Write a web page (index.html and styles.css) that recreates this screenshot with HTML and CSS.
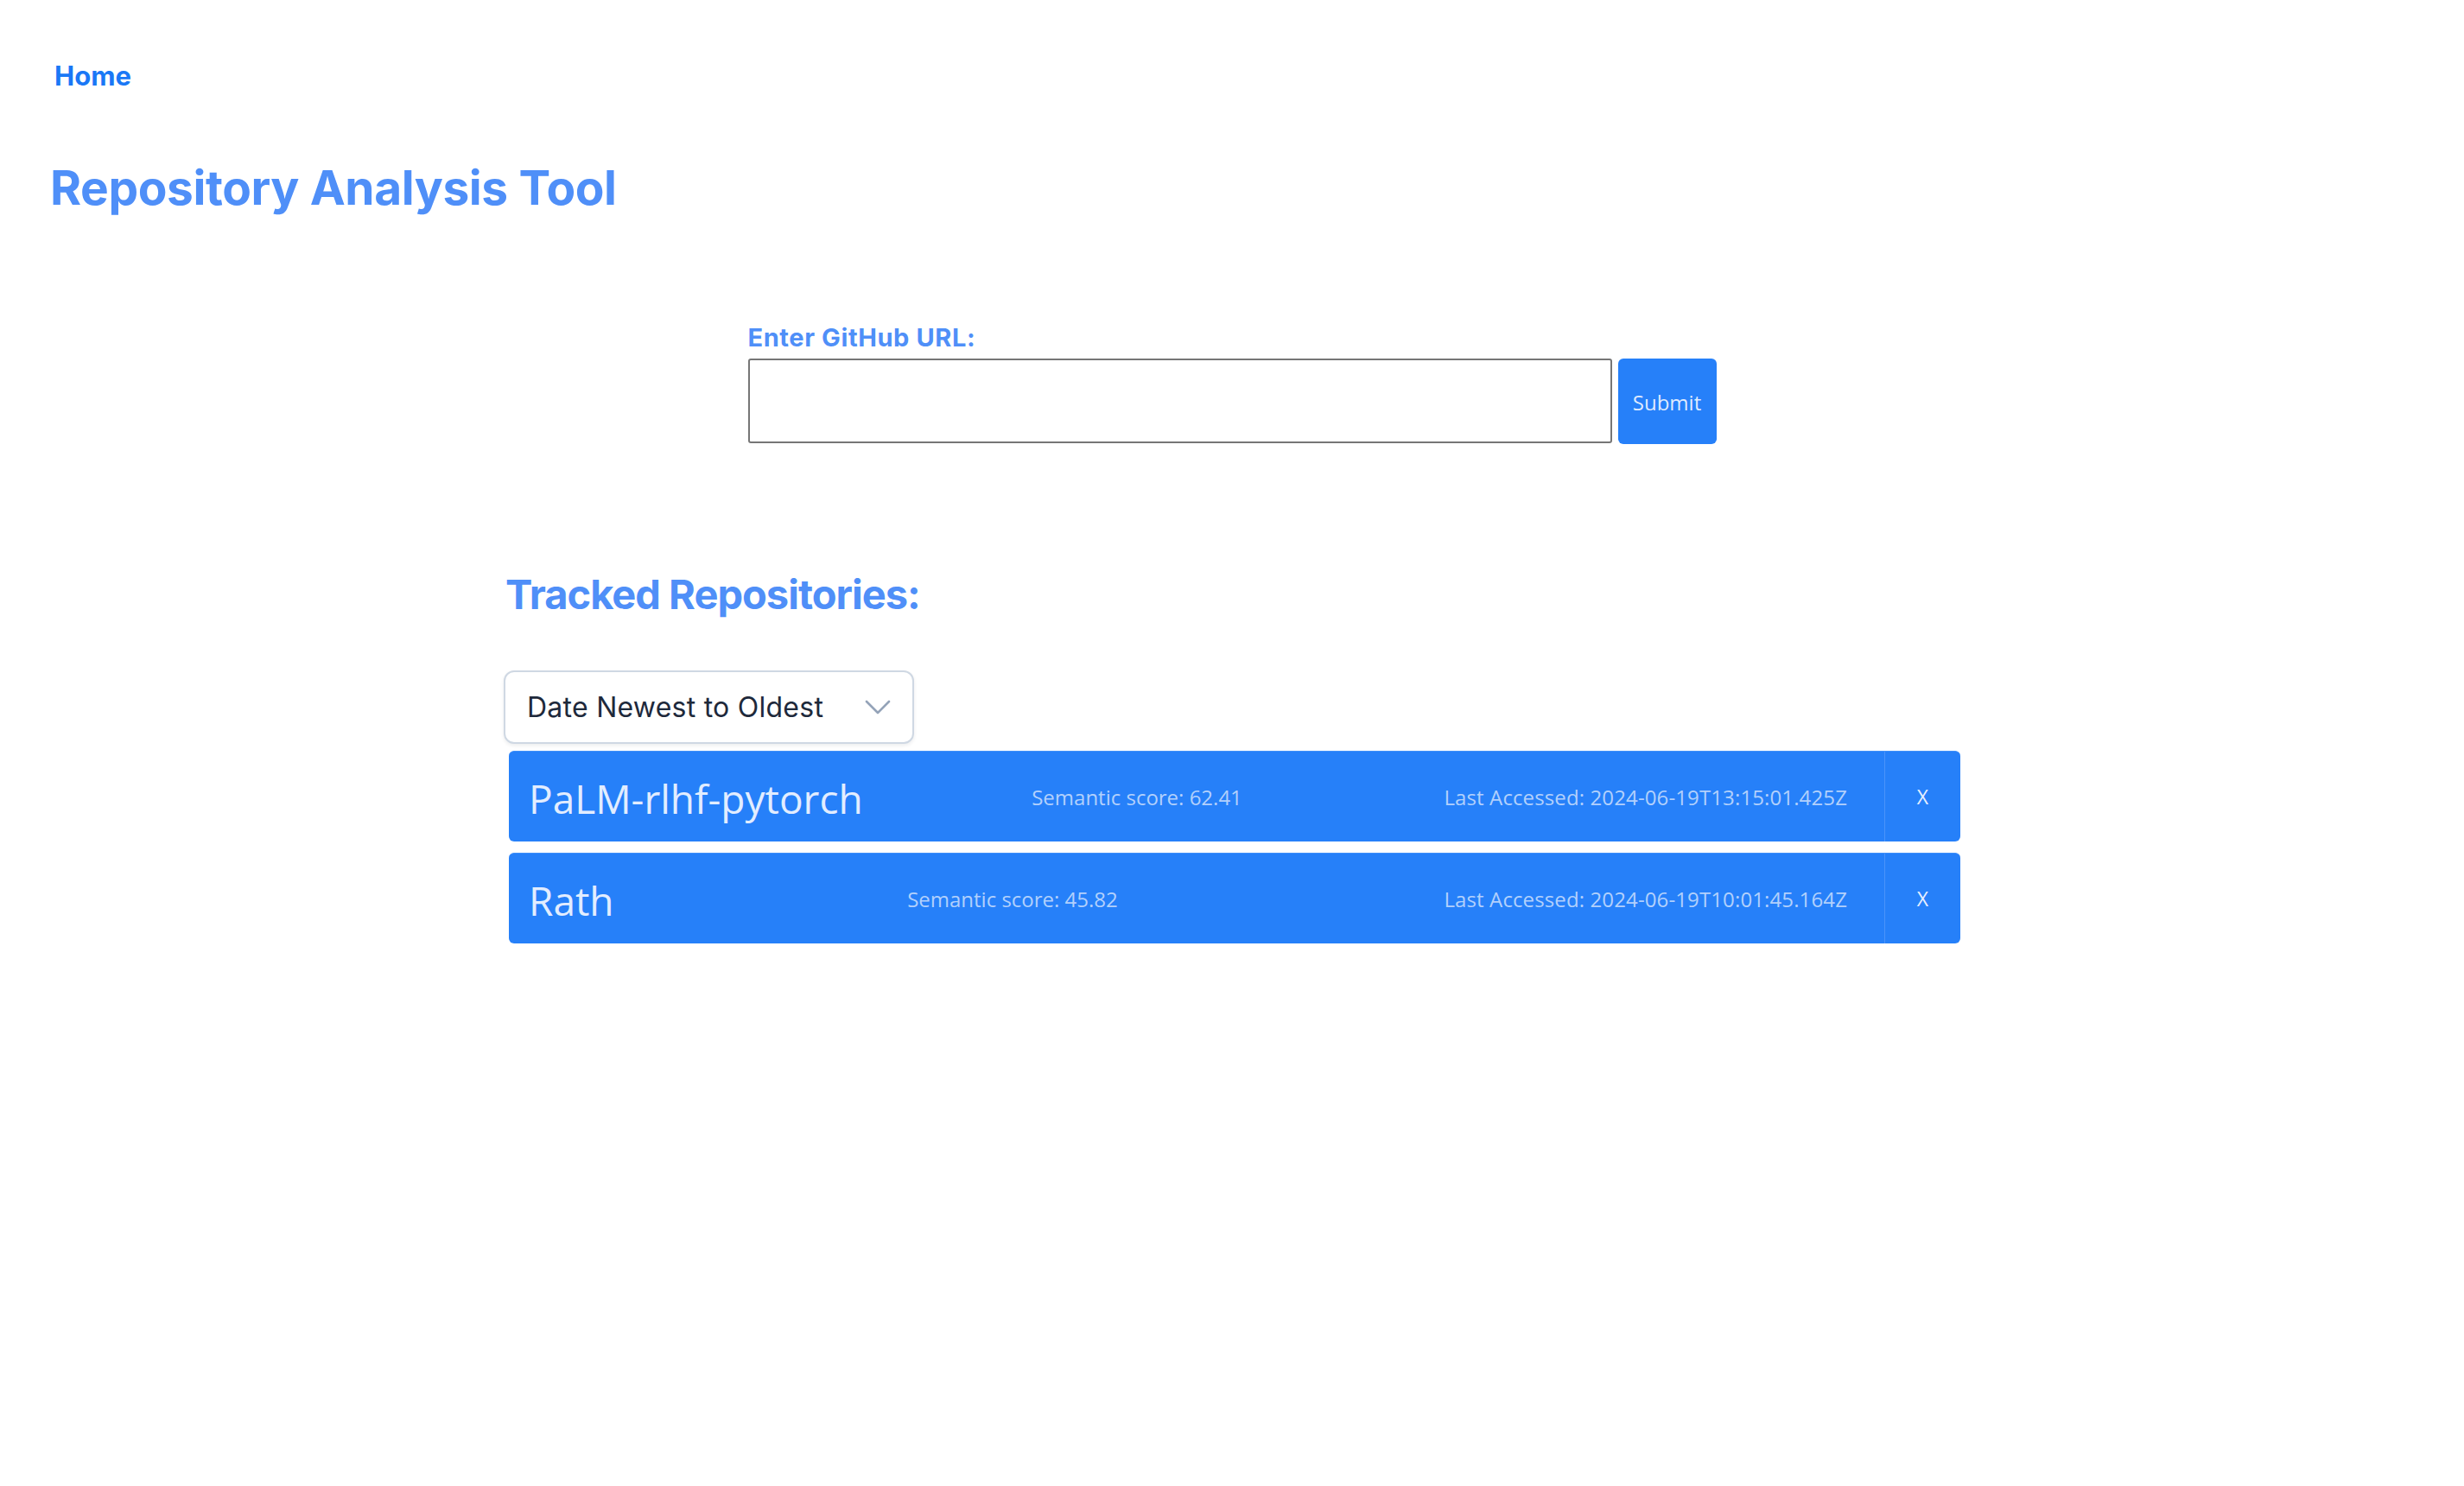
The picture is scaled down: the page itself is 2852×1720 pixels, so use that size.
FILE: index.html
```html
<!DOCTYPE html>
<html lang="en">
<head>
<meta charset="utf-8">
<title>Repository Analysis Tool</title>
<link rel="stylesheet" href="styles.css">
</head>
<body>
<nav class="nav"><a class="nav-link" href="#">Home</a></nav>
<h1 class="title">Repository Analysis Tool</h1>
<form class="url-form">
  <label class="url-label" for="url">Enter GitHub URL:</label>
  <div class="url-row">
    <input class="url-input" id="url" type="text">
    <button class="submit-btn" type="button">Submit</button>
  </div>
</form>
<section class="tracked">
  <h2 class="tracked-title">Tracked Repositories:</h2>
  <div class="sort-select">
    <span class="sort-text">Date Newest to Oldest</span>
    <svg class="chevron" width="30" height="17" viewBox="0 0 30 17"><path d="M2 2 L15 15 L28 2" fill="none" stroke="#94a3b8" stroke-width="2.6" stroke-linecap="round" stroke-linejoin="round"/></svg>
  </div>
  <ul class="repo-list">
    <li class="repo">
      <div class="repo-main">
        <span class="repo-name">PaLM-rlhf-pytorch</span>
        <span class="repo-score">Semantic score: 62.41</span>
        <span class="repo-date">Last Accessed: 2024-06-19T13:15:01.425Z</span>
      </div>
      <button class="repo-remove" type="button">X</button>
    </li>
    <li class="repo">
      <div class="repo-main">
        <span class="repo-name">Rath</span>
        <span class="repo-score">Semantic score: 45.82</span>
        <span class="repo-date">Last Accessed: 2024-06-19T10:01:45.164Z</span>
      </div>
      <button class="repo-remove" type="button">X</button>
    </li>
  </ul>
</section>
</body>
</html>
```
FILE: styles.css
```css
* { box-sizing: border-box; }
html, body { margin: 0; padding: 0; background: #ffffff; }
body { font-family: Inter, "Liberation Sans", sans-serif; }

.nav { padding: 68px 0 0 63px; height: 108px; }
.nav-link {
  display: block;
  font-size: 31px;
  line-height: 40px;
  font-weight: 700;
  color: #1a78f6;
  text-decoration: none;
}

.title {
  margin: 76px 0 0 58px;
  font-size: 55px;
  line-height: 66px;
  font-weight: 700;
  color: #4f8ff8;
  letter-spacing: -0.4px;
}

.url-form {
  width: 1121px;
  margin: 124px auto 0;
}
.url-label {
  display: block;
  font-size: 29px;
  line-height: 34px;
  font-weight: 700;
  color: #4f8ff8;
  letter-spacing: 0.6px;
}
.url-row {
  display: flex;
  gap: 7px;
  margin-top: 7px;
}
.url-input {
  width: 1000px;
  height: 98px;
  border: 2px solid #767676;
  border-radius: 3px;
  background: #fff;
  font-size: 24px;
}
.submit-btn {
  width: 114px;
  height: 99px;
  border: none;
  border-radius: 6px;
  background: #2680f9;
  color: #dfeaff;
  font-family: "Open Sans", sans-serif;
  font-size: 24px;
  padding: 2px 0 0;
}

.tracked {
  width: 1686px;
  margin: 146px auto 0;
}
.tracked-title {
  margin: 0 0 0 2px;
  font-size: 47px;
  line-height: 56px;
  font-weight: 700;
  color: #4f8ff8;
  letter-spacing: -1px;
}
.sort-select {
  margin-top: 60px;
  width: 475px;
  height: 85px;
  border: 2px solid #cfd8e3;
  border-radius: 12px;
  box-shadow: 0 2px 4px rgba(15, 23, 42, 0.08);
  display: flex;
  align-items: center;
  justify-content: space-between;
  padding: 0 25px 0 25px;
  background: #fff;
}
.sort-text {
  font-family: Inter, sans-serif;
  font-size: 32px;
  color: #1e293b;
  letter-spacing: 0.25px;
}
.chevron { display: block; }

.repo-list {
  list-style: none;
  margin: 8px 0 0 6px;
  padding: 0;
  display: flex;
  flex-direction: column;
  gap: 13px;
}
.repo {
  display: flex;
  height: 105px;
  background: #2680f9;
  border-radius: 6px;
  border-top: 1px solid #3f8ffa;
  font-family: "Open Sans", sans-serif;
}
.repo-main {
  flex: 1;
  display: flex;
  align-items: center;
  justify-content: space-between;
  padding: 0 43px 0 23px;
}
.repo-name {
  font-size: 46px;
  color: #e2edff;
  padding-top: 3px;
}
.repo-score {
  font-size: 24px;
  color: #b2d0fc;
  margin-right: 38px;
}
.repo-date {
  font-size: 24px;
  color: #b2d0fc;
  letter-spacing: 0.12px;
}
.repo-remove {
  width: 88px;
  border: none;
  border-left: 1px solid #4a94fa;
  background: transparent;
  color: #e6efff;
  font-family: "Open Sans", sans-serif;
  font-size: 23px;
  padding: 0;
}
```
